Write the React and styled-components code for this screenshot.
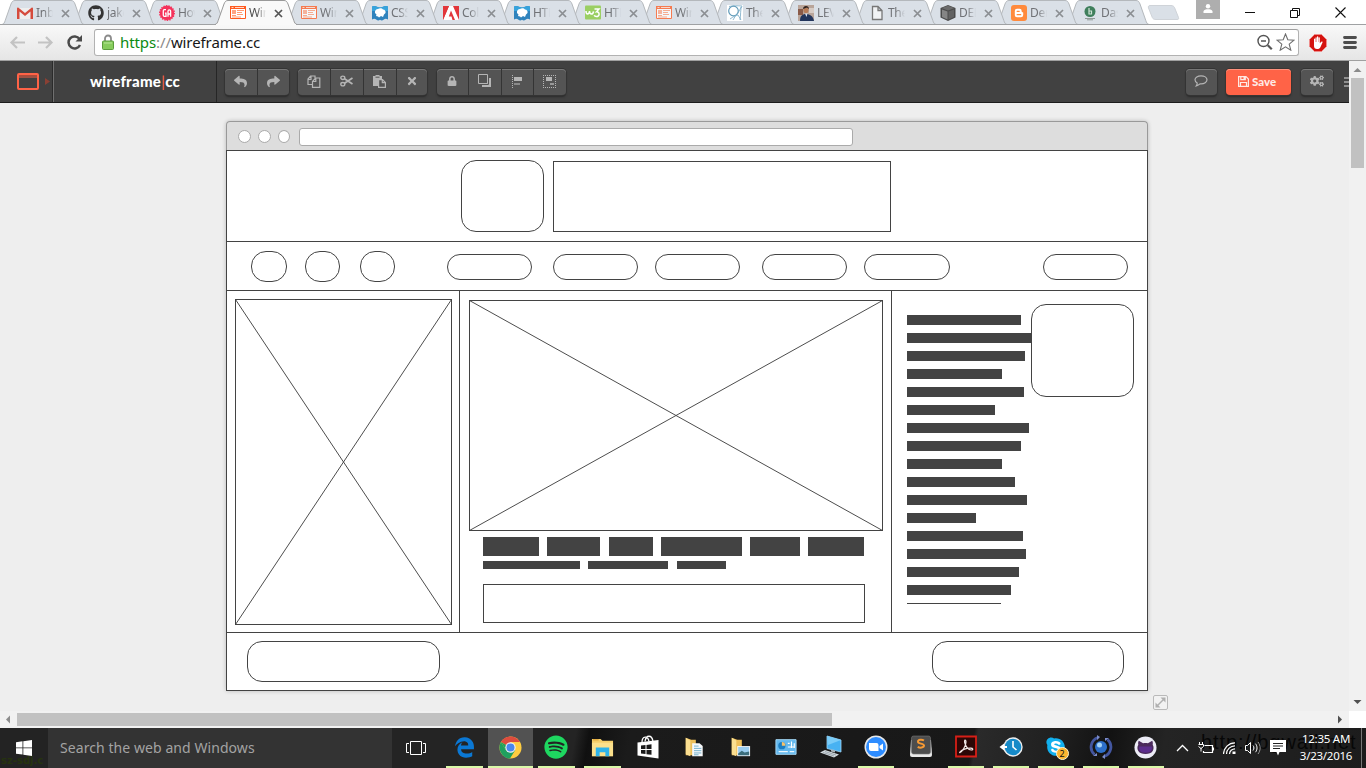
import React from "react";
import styled, { createGlobalStyle, css } from "styled-components";
import {
  FaReply, FaShare, FaTimes, FaLock, FaGithub, FaSpotify, FaSkype, FaCogs,
} from "react-icons/fa";
import { FaEdgeLegacy } from "react-icons/fa6";

const INK = "#434343";
const UI = `"Noto Sans", "Open Sans", sans-serif`;

const Global = createGlobalStyle`
  *, *::before, *::after { box-sizing: border-box; }
  body { margin: 0; overflow: hidden; font-family: ${UI}; }
  svg { display: block; flex: none; }
`;

const Screen = styled.div`
  width: 1366px;
  height: 768px;
  display: flex;
  flex-direction: column;
  overflow: hidden;
  background: #fff;
`;

/* ---------- browser tabs ---------- */

const TabStrip = styled.div`
  height: 25px;
  display: flex;
  align-items: flex-start;
  padding-left: 2px;
  background: #fff;
  box-shadow: inset 0 -1px #9fa1a3;
`;

const Tab = styled.div`
  position: relative;
  z-index: ${(p) => p.$z};
  width: 82px;
  height: 25px;
  margin-right: -11px;
  padding: 1px 0 0 15px;
  display: flex;
  align-items: center;
  flex: none;
`;

const TabShape = styled.svg`
  position: absolute;
  left: 0;
  top: 0;
  z-index: -1;
`;

const TabTitle = styled.span`
  width: 17px;
  margin: 0 8px 0 3px;
  overflow: hidden;
  white-space: nowrap;
  font-size: 12px;
  line-height: 20px;
  letter-spacing: -0.3px;
  color: ${(p) => (p.$active ? "#4c4c4c" : "#707276")};
  mask-image: linear-gradient(90deg, #000 45%, transparent 100%);
`;

const NewTab = styled.svg`
  margin: 4px 0 0 9px;
`;

const UserBadge = styled.div`
  width: 24px;
  height: 19px;
  margin-left: 15px;
  display: flex;
  justify-content: center;
  padding-top: 4px;
  background: #aeaeae;
`;

const WindowButtons = styled.div`
  display: flex;
  align-items: center;
  height: 24px;
  margin-left: 25px;
  gap: 35px;
`;

/* ---------- address row ---------- */

const AddressRow = styled.div`
  height: 36px;
  display: flex;
  align-items: center;
  padding: 0 9px;
  background: linear-gradient(#f8f8f8, #e6e6e6);
  border-bottom: 1px solid #a0a0a0;
`;

const NavIcons = styled.div`
  display: flex;
  gap: 13px;
  width: 85px;
  padding-bottom: 1px;
`;

const Omnibox = styled.div`
  width: 1205px;
  height: 27px;
  display: flex;
  align-items: center;
  padding: 0 3px 1px 7px;
  background: #fff;
  border: 1px solid #b2b2b2;
  border-top-color: #9f9f9f;
  border-radius: 3px;
`;

const Url = styled.span`
  flex: 1;
  margin-left: 6px;
  font-size: 15px;
  line-height: 20px;
  letter-spacing: -0.1px;
  color: #161616;
  i { font-style: normal; color: #0b8a12; }
  b { font-weight: 400; color: #8a8a8a; }
`;

const StarSlot = styled.div`
  margin-left: 3px;
`;

const ExtensionSlot = styled.div`
  margin: 0 16px 0 10px;
`;

/* ---------- editor ---------- */

const Viewport = styled.div`
  flex: 1;
  display: flex;
  min-height: 0;
`;

const Page = styled.div`
  width: 1349px;
  height: 650px;
  background: #eee;
  overflow: hidden;
`;

const Toolbar = styled.div`
  height: 42px;
  display: flex;
  align-items: center;
  background: #414141;
  border-bottom: 1px solid #1c1c1c;
`;

const LogoCell = styled.div`
  width: 54px;
  height: 41px;
  display: flex;
  align-items: center;
  padding-left: 17px;
  gap: 6px;
  border-right: 1px solid #707070;
  box-shadow: inset -1px 0 #2b2b2b;
`;

const BrandCell = styled.div`
  width: 163px;
  height: 41px;
  display: flex;
  align-items: center;
  justify-content: center;
  border-right: 1px solid #262626;
  font: 900 15px/20px Lato, sans-serif;
  letter-spacing: 0.27px;
  color: #fff;
  i { font-style: normal; font-weight: 400; color: #ff6347; }
`;

const Wordmark = styled.span`
  padding-bottom: 2px;
`;

const buttonFace = css`
  height: 26px;
  background: #545454;
  border-radius: 4px;
  box-shadow: 0 0 0 1px #343434, inset 0 1px #777, 0 2px 2px #2a2a2a;
`;

const ButtonGroup = styled.div`
  ${buttonFace}
  display: flex;
  margin-left: ${(p) => p.$gap}px;
  overflow: visible;
`;

const ToolButton = styled.div`
  width: ${(p) => p.$w || 32}px;
  height: 26px;
  display: flex;
  align-items: center;
  justify-content: center;
  padding: 0 1px 1px 0;
  color: #b5b5b5;
  & + & { border-left: 1px solid #343434; }
`;

const Spacer = styled.div`
  flex: 1;
`;

const SaveButton = styled.div`
  ${buttonFace}
  width: 65px;
  margin: 0 10px 0 9px;
  display: flex;
  align-items: center;
  justify-content: center;
  gap: 3px;
  padding-right: 3px;
  background: #ff6347;
  box-shadow: 0 0 0 1px #3a3533, inset 0 1px #ff917d, 0 2px 2px #2a2a2a;
  font: 900 11.5px/16px Lato, sans-serif;
  color: #ffe9e4;
`;

const MoreSlot = styled.div`
  width: 5px;
  margin-left: 11px;
  overflow: hidden;
`;

/* ---------- wireframe document ---------- */

const Doc = styled.div`
  width: 922px;
  margin: 18px 0 0 226px;
  box-shadow: 0 0 4px rgba(0, 0, 0, 0.22);
  border-radius: 4px 4px 0 0;
`;

const DocChrome = styled.div`
  height: 29px;
  display: flex;
  align-items: center;
  gap: 7px;
  padding: 1px 0 0 11px;
  background: #ddd;
  border: 1px solid #999;
  border-bottom: 0;
  border-radius: 4px 4px 0 0;
`;

const Dot = styled.div`
  width: ${(p) => p.$w || 13}px;
  height: 13px;
  border: 1px solid #aaa;
  border-radius: 50%;
  background: #fff;
`;

const DocUrl = styled.div`
  width: 554px;
  height: 18px;
  margin-left: 2px;
  border: 1px solid #aaa;
  border-radius: 3px;
  background: #fff;
`;

const DocBody = styled.div`
  border: 1px solid ${INK};
  background: #fff;
`;

const Band = styled.div`
  display: flex;
  align-items: flex-start;
  height: ${(p) => p.$h}px;
  padding: ${(p) => p.$pad || "0"};
  border-bottom: ${(p) => (p.$last ? "0" : `1px solid ${INK}`)};
`;

const Column = styled.div`
  width: ${(p) => p.$w}px;
  height: 341px;
  padding: ${(p) => p.$pad};
  border-right: ${(p) => (p.$last ? "0" : `1px solid ${INK}`)};
`;

const Box = styled.div`
  width: ${(p) => p.$w}px;
  height: ${(p) => p.$h}px;
  margin: ${(p) => p.$m || "0"};
  border: 1px solid ${INK};
  border-radius: ${(p) => p.$r || 0}px;
  background: #fff;
  flex: none;
`;

const Words = styled.div`
  display: flex;
  height: ${(p) => p.$h}px;
  margin: ${(p) => p.$m};
`;

const Word = styled.div`
  width: ${(p) => p.$w}px;
  height: ${(p) => p.$h}px;
  margin-right: ${(p) => p.$gap || 0}px;
  background: ${INK};
`;

const TextLines = styled.div`
  width: 124px;
  height: 289px;
  margin-top: 11px;
  overflow: hidden;
  display: flex;
  flex-direction: column;
  gap: 8px;
  > * { flex: none; }
`;

const Aside = styled.div`
  display: flex;
  align-items: flex-start;
`;

const ResizeHandle = styled.div`
  margin: 4px 0 0 1153px;
`;

/* ---------- scrollbars ---------- */

const VScroll = styled.div`
  width: 17px;
  height: 650px;
  display: flex;
  flex-direction: column;
  align-items: center;
  background: #f1f1f1;
`;

const VThumb = styled.div`
  width: 13px;
  height: 90px;
  margin-bottom: auto;
  background: #c1c1c1;
`;

const HScroll = styled.div`
  width: 1349px;
  height: 17px;
  display: flex;
  align-items: center;
  background: #f1f1f1;
`;

const HThumb = styled.div`
  width: 815px;
  height: 13px;
  margin-right: auto;
  background: #c1c1c1;
`;

const ArrowSlot = styled.div`
  width: 17px;
  height: 17px;
  display: flex;
  align-items: center;
  justify-content: center;
`;

/* ---------- taskbar ---------- */

const Taskbar = styled.div`
  height: 40px;
  display: flex;
  background: linear-gradient(100deg, #242424 0 42%, #101010 43%, #1b1b1b 46%, #181818 71%, #2a2a2a 71.3%, #202020 77%, #121212 81%, #242424 85%, #1c1c1c 100%);
`;

const Start = styled.div`
  position: relative;
  width: 48px;
  display: flex;
  align-items: center;
  justify-content: center;
  background: #232323;
  overflow: hidden;
`;

const StartMark = styled.span`
  position: absolute;
  left: 1px;
  top: 27px;
  font: 700 10px/12px "DejaVu Sans", sans-serif;
  color: #26330f;
`;

const Search = styled.div`
  width: 344px;
  padding: 0 0 1px 12px;
  display: flex;
  align-items: center;
  background: #333;
  font-size: 14px;
  letter-spacing: 0.07px;
  color: #a3a3a3;
`;

const TaskView = styled.div`
  width: 49px;
  display: flex;
  align-items: center;
  padding-left: 14px;
`;

const AppCell = styled.div`
  width: ${(p) => p.$w}px;
  height: 40px;
  padding: 0 0 0 5px;
  flex: none;
`;

const AppFace = styled.div`
  width: ${(p) => (p.$active ? 45 : p.$w - 9)}px;
  height: 40px;
  margin-left: ${(p) => (p.$active ? -4 : 0)}px;
  display: flex;
  align-items: center;
  justify-content: center;
  padding-right: 1px;
  background: ${(p) => (p.$active ? "#525252" : "transparent")};
  border-bottom: ${(p) => (p.$running ? "2px solid #d9f8a8" : "2px solid transparent")};
  background-clip: padding-box;
`;

const Tray = styled.div`
  position: relative;
  flex: 1;
  display: flex;
  align-items: center;
  padding-left: 8px;
`;

const TrayMark = styled.span`
  position: absolute;
  left: 33px;
  top: 1px;
  font: 20px/26px "Liberation Sans", sans-serif;
  letter-spacing: 0.9px;
  color: #070707;
`;

const TrayIcons = styled.div`
  position: relative;
  display: flex;
  align-items: center;
  gap: 9px;
`;

const Clock = styled.div`
  position: relative;
  width: 62px;
  margin-left: 9px;
  padding-bottom: 2px;
  display: flex;
  flex-direction: column;
  align-items: center;
  gap: 1px;
  font-size: 11.5px;
  line-height: 16px;
  letter-spacing: -0.25px;
  color: #fff;
`;

const DesktopEdge = styled.div`
  width: 5px;
  height: 40px;
  margin-left: auto;
  border-left: 1px solid #777;
`;

/* ---------- favicons ---------- */

const I16 = (p) => <svg width="16" height="16" viewBox="0 0 16 16" {...p} />;

const Gmail = () => (
  <I16>
    <path d="M1 3h14v11H1z" fill="#eee" />
    <path d="M0 3.400C0 2.600.8 2.300 1.500 2.800L8 8l6.500-5.200c.7-.5 1.500-.2 1.500.6V14h-2.500V6.500L8 11 2.500 6.500V14H0z" fill="#d54b3d" />
  </I16>
);
const Assembly = () => (
  <I16>
    <circle cx="8" cy="8" r="7.200" fill="#f5325b" stroke="#f5325b" strokeWidth="1.500" strokeDasharray="1.500 1" />
    <path d="M7 4.700H5.300a1 1 0 0 0-1 1v4.600a1 1 0 0 0 1 1H7V8.200H6M9 11.700V6.200a1.300 1.300 0 0 1 2.600 0v5.500M9 9h2.600" fill="none" stroke="#fff" strokeWidth="1.300" />
  </I16>
);
const Wire = ({ dim }) => (
  <I16 opacity={dim ? 0.75 : 1}>
    <path d="M0 1h16v13H0z" fill="#fff" />
    <path d="M0 1h16v3H0z" fill="#ff5a1f" />
    <path d="M.5 1.500h15v12H.5z" fill="none" stroke="#ff5a1f" />
    <path d="M1.500 2.500h2M5 2.500h9" stroke="#ffd8c8" />
    <path d="M2 5h4v4H2z" fill="#ffa483" />
    <path d="M7 5.500h7M7 7.500h5M7 9.500h6M2 10.500h4M2 12h9" stroke="#ff9b75" />
  </I16>
);
const Mdn = () => (
  <I16>
    <path d="M0 1.500c2-1 3.500-.6 5 .3 1.500 1 4.500 1 6 0 1.500-.9 3-1.300 5-.3v13c-2-1-3-.8-4.500.3-1 .8-2.500.8-3.500 0-1 .8-2.500.8-3.500 0C3 13.700 2 13.500 0 14.500z" fill="#2f83bd" />
    <path d="M0 1.500c2-1 3.500-.6 5 .3 1.500 1 4.500 1 6 0 1.500-.9 3-1.300 5-.3V6H0z" fill="#36a3dc" />
    <path d="M3 8c-.5-2 1-4 3-4 1.500-1 4-1 5 .5 2 0 3 2 2.500 3.500L12 9.500 11 12l-2-1-2 1.500-1-1-2-.5.500-1.500z" fill="#fff" />
  </I16>
);
const Adobe = () => (
  <I16>
    <path d="M0 1h16v14H0z" fill="#e2363b" />
    <path d="M6 1h4l6 14h-4L8 5.500 5.800 11.500h2.700L9.500 15H0z" fill="#fff" />
    <path d="M0 1h6L0 15z" fill="#e2363b" />
  </I16>
);
const W3 = () => (
  <I16>
    <rect width="16" height="14" y="0.500" rx="1" fill="#9bcf63" />
    <path d="M1 6c0 4 3 4 3.500 0 .3 4 3.500 4 4 .3M9.500 4H14l-2.500 2.800c3.500-.3 3.500 5-.3 4.800-1 0-1.700-.5-2-1.300" fill="none" stroke="#fff" strokeWidth="1.500" />
  </I16>
);
const Sketch = () => (
  <I16>
    <path d="M0 0h16v16H0z" fill="#fff" />
    <circle cx="6.500" cy="6" r="4.800" fill="none" stroke="#5f9ab9" strokeWidth="1.200" />
    <path d="M2 1.500c4-1 9-.8 13-.5-2 3-1 9-2 14M9 10c2-2 4-5 5-8M3 14c3-2 6-4 8-4l3 5M6 15l3-5" fill="none" stroke="#76aac5" strokeWidth=".8" />
  </I16>
);
const Photo = () => (
  <I16>
    <path d="M0 0h16v16H0z" fill="#b9a59a" />
    <path d="M0 4h5v6H0z" fill="#8a5b49" />
    <path d="M11 3h5v5h-5z" fill="#d7cbc4" />
    <path d="M2 16c0-5 2-7 6-7s7 2 8 7z" fill="#22355c" />
    <ellipse cx="8" cy="4.800" rx="2.600" ry="3.400" fill="#b77c58" />
    <path d="M5 4c0-4 6-4 6 0L9 2.500z" fill="#2b211f" />
    <path d="M7 8.500h2.500L8.500 12z" fill="#d9e2f2" />
  </I16>
);
const FileIcon = () => (
  <I16>
    <path d="M3.500 1.500H9l4 4v9H3.500zM9 1.500v4h4" fill="#f0f2f4" stroke="#777" strokeWidth="1.300" />
  </I16>
);
const Cube = () => (
  <I16>
    <path d="M8 0l7.500 3v9.500L8 16 .5 12.500V3z" fill="#4b4b4b" />
    <path d="M8 .7L14.500 3 8 5.500 1.500 3z" fill="#6b6b6b" />
    <path d="M2 4.500l5.500 2v8L2 12z" fill="#858585" />
    <path d="M14 4.500l-5.500 2v8L14 12z" fill="#626262" />
  </I16>
);
const Blogger = () => (
  <I16>
    <rect width="16" height="16" rx="3" fill="#ff8a3c" />
    <path d="M6 3.800h2.500a2.200 2.200 0 0 1 2.200 2.200v.7c0 .6 1.500.2 1.500 1V10a2.300 2.300 0 0 1-2.300 2.300H6A2.200 2.200 0 0 1 3.800 10V6A2.200 2.200 0 0 1 6 3.800z" fill="#fff" />
    <path d="M6.200 6.300h2M6.200 9.700h3.500" stroke="#ff8a3c" strokeWidth="1.300" strokeLinecap="round" />
  </I16>
);
const Dash = () => (
  <I16>
    <circle cx="8" cy="6.500" r="5.500" fill="#3f7f5c" />
    <path d="M7 3v6h2.500V6H7" fill="none" stroke="#cfe3d6" strokeWidth="1.200" />
    <path d="M3 13.500h10M5 14.800h6" stroke="#8f9a96" />
  </I16>
);

const TABS = [
  ["Inbox", <Gmail />],
  ["jake", <FaGithub size={16} color="#333" />],
  ["How", <Assembly />],
  ["Wire", <Wire />],
  ["Wire", <Wire dim />],
  ["CSS", <Mdn />],
  ["Color", <Adobe />],
  ["HTML", <Mdn />],
  ["HTML", <W3 />],
  ["Wire", <Wire dim />],
  ["The", <Sketch />],
  ["LEVI", <Photo />],
  ["The", <FileIcon />],
  ["DEN", <Cube />],
  ["Dem", <Blogger />],
  ["Dash", <Dash />],
];
const ACTIVE_TAB = 3;

/* ---------- toolbar glyphs ---------- */

const CopyIcon = () => (
  <svg width="14" height="13" viewBox="0 0 14 13" fill="none" stroke="currentColor" strokeWidth="1.200">
    <path d="M5 9.500H1V4l2.500-3H8v2M4 1v3.500H1" />
    <path d="M5.500 12.300V6.500L8.500 3h4.300v9.300zM8.800 3v3.500H5.500" />
  </svg>
);
const CutIcon = () => (
  <svg width="13" height="12" viewBox="0 0 13 12" fill="none" stroke="currentColor" strokeWidth="1.400">
    <ellipse cx="2.800" cy="2.800" rx="2" ry="1.700" />
    <ellipse cx="2.800" cy="9.200" rx="2" ry="1.700" />
    <path d="M4.500 3.800L12.500 9M4.500 8.200L12.500 3" strokeWidth="1.700" />
  </svg>
);
const PasteIcon = () => (
  <svg width="13" height="13" viewBox="0 0 13 13">
    <path d="M0 1h2.500V0h4v1H9v3H5v7H0z" fill="currentColor" />
    <path d="M2.500 2.200h4" stroke="#545454" />
    <path d="M5.600 4.600h3.900l2.900 2.900v4.900H5.600zM9.300 4.600v3h3" fill="#545454" stroke="currentColor" strokeWidth="1.200" />
  </svg>
);
const CommentIcon = () => (
  <svg width="14" height="12" viewBox="0 0 14 12" fill="none" stroke="currentColor" strokeWidth="1.200">
    <path d="M7 .8c3.300 0 6 1.700 6 4s-2.700 4-6 4H6C5 9.800 3.500 10.500 2.300 10.800 2.900 10 3.200 9 3.200 8 1.800 7.200 1 6.100 1 4.800c0-2.300 2.700-4 6-4z" />
  </svg>
);
const FloppyIcon = () => (
  <svg width="11" height="11" viewBox="0 0 11 11" fill="none" stroke="currentColor" strokeWidth="1.200">
    <path d="M.6.6H8l2.400 2.400v7.400H.6zM2.800.6v3h4.500v-3M2.500 10.400V6.500h6v3.900" />
    <path d="M5.500 1h1.500v2H5.500z" fill="currentColor" stroke="none" />
  </svg>
);
const LayerIcon = () => (
  <svg width="14" height="14" viewBox="0 0 14 14">
    <path d="M4 4h9v9H4z" fill="#b5b5b5" />
    <path d="M10.500 2v8.500H2" fill="none" stroke="#545454" />
    <path d="M.5.5h9v9h-9z" fill="#545454" stroke="#b5b5b5" />
  </svg>
);
const AlignIcon = () => (
  <svg width="11" height="13" viewBox="0 0 11 13">
    <path d="M.5 0v13" stroke="#b5b5b5" strokeDasharray="1 1" />
    <path d="M2 2h8v4H2z" fill="#b5b5b5" />
    <path d="M2 8h6v2H2z" fill="#8a8a8a" />
  </svg>
);
const GroupIcon = () => (
  <svg width="13" height="13" viewBox="0 0 13 13">
    <path d="M0 .5h13M0 12.500h13M.5 0v13M12.500 0v13" stroke="#b5b5b5" strokeDasharray="1 1" />
    <path d="M3 2h6v4H3z" fill="#b5b5b5" />
    <path d="M7 8h4v2H7z" fill="#999" />
  </svg>
);

/* ---------- taskbar icons ---------- */

const T = ({ s = 24, children }) => <svg width={s} height={s} viewBox="0 0 24 24">{children}</svg>;

const ChromeIcon = () => (
  <T s={23}>
    <circle cx="12" cy="12" r="11.500" fill="#ffcd41" />
    <path d="M12 12L2 6.300A11.500 11.500 0 0 1 22 6.300H12z" fill="#dd4c3e" />
    <path d="M2 6.300A11.500 11.500 0 0 0 11.500 23.500L17 14.500 12 12 7.500 15z" fill="#1fa05f" />
    <path d="M12 12L2 6.300 7.500 15z" fill="#1fa05f" />
    <circle cx="12" cy="12" r="5.400" fill="#f4f4f4" />
    <circle cx="12" cy="12" r="4.200" fill="#4a87ee" />
  </T>
);
const Explorer = () => (
  <T s={23}>
    <path d="M1 3h9l2 2h11v16H1z" fill="#f5cf6b" />
    <path d="M1 7h22v14H1z" fill="#fbe08c" />
    <path d="M2 4h6" stroke="#d89a2c" />
    <path d="M5 21v-9h14v9h-4v-4H9v4z" fill="#2eb3ea" />
  </T>
);
const Store = () => (
  <T>
    <path d="M6 7.500c0-7 6-7 7-1M9 6.500c1-7 7-7 8 0" fill="none" stroke="#fff" strokeWidth="1.300" />
    <path d="M1.500 7.500L22.500 5v18.500l-21-3z" fill="#fff" />
    <path d="M5 10.500l4.500-.5v4H5zM10.500 9.900l5-.6V14h-5zM5 15h4.500v4L5 18.400zM10.500 15h5v4.800l-5-.6z" fill="#1b1b1b" />
  </T>
);
const FolderDoc = () => (
  <T s={22}>
    <path d="M3 2l6 2h5v17H3z" fill="#eebf59" />
    <path d="M3 2l5 3v17l-5-2z" fill="#fbdf91" />
    <path d="M10 8h8l3.500 3v11H10z" fill="#f6f8fa" />
    <path d="M12 11h5M12 13.500h8M12 16h8M12 18.500h8M12 20.500h5" stroke="#6aaccb" />
  </T>
);
const FolderPic = () => (
  <T s={22}>
    <path d="M3 2l6 2h5v17H3z" fill="#eebf59" />
    <path d="M3 2l5 3v17l-5-2z" fill="#fbdf91" />
    <path d="M9 11h14v11H9z" fill="#f6f8fa" />
    <path d="M10 12h12v9H10z" fill="#9acdf0" />
    <path d="M10 19l4-3 3 2 5-1v4H10z" fill="#3b6d7c" />
  </T>
);
const Control = () => (
  <T s={22}>
    <path d="M1 4h22v16H1z" fill="#63b8ee" stroke="#a9dcfa" />
    <circle cx="7.500" cy="10.500" r="4" fill="#1c7fc4" />
    <path d="M7.500 10.500v-4a4 4 0 0 1 3.800 4z" fill="#f6c26b" />
    <path d="M14 8h2M18 6v7M21 8v5M14 12h7" stroke="#fff" strokeWidth="1.300" />
    <path d="M4 17h10M16 17h5" stroke="#ecf8ff" strokeWidth="1.400" />
  </T>
);
const Pc = () => (
  <T>
    <path d="M8 1l14 4v12L8 13.500z" fill="#48b2f2" stroke="#9ed6f7" strokeWidth=".8" />
    <path d="M8 1l14 4L9 10z" fill="#7accf8" />
    <path d="M12 14.500l4 1v2l-4-1z" fill="#aab3b9" />
    <path d="M1 17.500l5-2.500 14 4.500-5 3z" fill="#d5dce1" />
    <path d="M4 17.500l11 3.500M6 16.500l11 3.500" stroke="#8f9aa2" strokeWidth=".8" />
  </T>
);
const ZoomIcon = () => (
  <T>
    <circle cx="12" cy="12" r="11.500" fill="#e8e8e8" />
    <circle cx="12" cy="12" r="10" fill="#2d8cff" />
    <path d="M5 8h7.500a2 2 0 0 1 2 2v6H7a2 2 0 0 1-2-2zM15.500 11l3.500-2.500v7L15.500 13z" fill="#fff" />
  </T>
);
const Sublime = () => (
  <T>
    <path d="M2 5h20l1 15q0 2-2 2H3q-2 0-2-2z" fill="#e9e9e9" />
    <rect x="2.500" y="1" width="19" height="18" rx="2" fill="#4d4d4d" stroke="#777" strokeWidth=".6" />
    <path d="M15 5.500c-2-1.200-6-1-6 1.200 0 2.400 6 1.400 6 3.900 0 2.300-4.200 2.500-6.300 1.300" fill="none" stroke="#f79a33" strokeWidth="2" />
  </T>
);
const Acrobat = () => (
  <T>
    <path d="M2 1.500h20v20H2z" fill="#2b0706" stroke="#d61f17" strokeWidth="1.800" />
    <path d="M6 17.500c2-.7 6-6.500 6-10.500 0-2.500-2-2.500-1.300.5.800 3.500 3.500 7.500 6.500 7.500 2.500 0 2-2-1-1.800-3.500.2-8 1.800-9.700 3.300-1 1-1 1.500-.5 1z" fill="none" stroke="#f3e9e8" strokeWidth="1.200" />
  </T>
);
const BackupClock = () => (
  <T>
    <circle cx="14" cy="12" r="9.700" fill="#eee" />
    <circle cx="14" cy="12" r="8.300" fill="#168ac8" />
    <path d="M14 6v6l3.500 3" stroke="#fff" strokeWidth="1.600" fill="none" />
    <path d="M5 8.500L.5 12 5 15.500V13h3v-2H5z" fill="#fff" />
  </T>
);
const SkypeSlot = styled.div`
  position: relative;
  display: flex;
  > svg { background: radial-gradient(#fff 45%, transparent 46%); }
`;
const Count = styled.span`
  position: absolute;
  left: 11px;
  top: 11px;
  width: 13px;
  height: 13px;
  border-radius: 50%;
  border: 1px solid #fff5d0;
  background: #fdb62f;
  font: 9px/11px ${UI};
  text-align: center;
  color: #111;
`;
const Globe = () => (
  <T>
    <circle cx="12" cy="12" r="6" fill="#2d6fc9" />
    <circle cx="10.500" cy="10" r="2.500" fill="#a5d3f7" />
    <path d="M9 2.500A10 10 0 0 0 5.500 19.500M15 21.500A10 10 0 0 0 18.500 4.500" fill="none" stroke="#4356a0" strokeWidth="2.800" />
    <path d="M8 0l3 2-3 3zM16 24l-3-2 3-3zM4 21h4v-3zM20 3h-4v3z" fill="#7a8bca" />
  </T>
);
const GitCat = () => (
  <T s={23}>
    <circle cx="12" cy="12" r="11.500" fill="#ececf6" />
    <path d="M5 5l4.500 2.500c1.500-.4 3.500-.4 5 0L19 5c.8 1.500.8 3 .5 4.200 1.300 2 1.200 4.600 0 6.500C18 18 15.500 18.800 12 18.800S6 18 4.500 15.700c-1.200-1.900-1.300-4.500 0-6.500C4.200 8 4.200 6.500 5 5z" fill="#4a2a5c" />
    <path d="M5.500 11h13c1 3.500-1 6.500-6.500 6.500S4.500 14.500 5.500 11z" fill="#5b2d8d" />
  </T>
);

const APPS = [
  { icon: <FaEdgeLegacy size={21} color="#0b78d4" />, running: true },
  { icon: <ChromeIcon />, running: true, active: true },
  { icon: <FaSpotify size={24} color="#1ed760" />, running: true },
  { icon: <Explorer />, running: true },
  { icon: <Store /> },
  { icon: <FolderDoc /> },
  { icon: <FolderPic /> },
  { icon: <Control /> },
  { icon: <Pc /> },
  { icon: <ZoomIcon />, running: true },
  { icon: <Sublime /> },
  { icon: <Acrobat />, running: true },
  { icon: <BackupClock />, running: true },
  { icon: <SkypeSlot><FaSkype size={22} color="#12b0ee" /><Count>2</Count></SkypeSlot>, running: true },
  { icon: <Globe />, running: true },
  { icon: <GitCat />, running: true },
];

/* ---------- wireframe data ---------- */

const WORDS_BIG = [[56, 8], [53, 9], [44, 8], [81, 8], [50, 8], [56, 0]];
const WORDS_SMALL = [[97, 8], [80, 9], [49, 0]];
const LINES = [114, 124, 118, 95, 117, 88, 122, 114, 95, 108, 120, 69, 116, 119, 112, 104, 94];

const Crossed = ({ w, h }) => (
  <svg width={w} height={h} viewBox={`0 0 ${w} ${h}`} fill="none" stroke={INK}>
    <rect x=".5" y=".5" width={w - 1} height={h - 1} />
    <path d={`M.5 .5L${w - 0.5} ${h - 0.5}M${w - 0.5} .5L.5 ${h - 0.5}`} strokeWidth=".95" />
  </svg>
);

const Arrow = ({ d, fill = "#505050" }) => (
  <ArrowSlot>
    <svg width="9" height="9" viewBox="0 0 9 9"><path d={d} fill={fill} /></svg>
  </ArrowSlot>
);

function BrowserTab({ title, icon, active, z }) {
  return (
    <Tab $z={z}>
      <TabShape width="82" height="25">
        <path
          d="M0 24.500C2 24 2.500 22.500 3.200 20.500L9 4C10 1.500 11 .5 13 .5H69C71 .5 72 1.500 73 4L78.800 20.500C79.500 22.500 80 24 82 24.500"
          fill={active ? "#f9f9f9" : "#dae0e7"}
          stroke={active ? "#999" : "#b4b8bc"}
        />
        {active ? <path d="M1 24.500h80" stroke="#f9f9f9" /> : <path d="M0 24.500h82" stroke="#9fa1a3" />}
      </TabShape>
      {icon}
      <TabTitle $active={active}>{title}</TabTitle>
      <svg width="9" height="9" viewBox="0 0 9 9">
        <path d="M1 1l7 7M8 1L1 8" stroke={active ? "#555" : "#8b8e92"} strokeWidth="1.700" />
      </svg>
    </Tab>
  );
}

export default function App() {
  return (
    <Screen>
      <Global />
      <TabStrip>
        {TABS.map(([title, icon], i) => (
          <BrowserTab key={i} title={title} icon={icon} active={i === ACTIVE_TAB} z={i === ACTIVE_TAB ? 40 : 20 - i} />
        ))}
        <NewTab width="34" height="17">
          <path d="M3 1.500h21c2 0 3 1 3.500 2l4 10c.4 1.500 0 2-1.500 2H9c-2 0-3-.5-3.700-2L1.500 4C1 2.500 1.500 1.500 3 1.500z" fill="#dae0e7" stroke="#cfd3d8" />
        </NewTab>
        <UserBadge>
          <svg width="10" height="9" viewBox="0 0 10 9" fill="#fff"><circle cx="5" cy="2.200" r="2.200" /><path d="M.5 9V7.500C.5 5.800 3 5.300 5 5.300s4.500.5 4.500 2.200V9z" /></svg>
        </UserBadge>
        <WindowButtons>
          <svg width="10" height="11"><path d="M0 5.500h10" stroke="#111" /></svg>
          <svg width="10" height="11" fill="none" stroke="#111"><path d="M.5 3.500h7v7h-7zM2.500 3V1.500h7v7H8" /></svg>
          <svg width="11" height="11" stroke="#111" strokeWidth="1.100"><path d="M.5.5l10 10M10.500.5l-10 10" /></svg>
        </WindowButtons>
      </TabStrip>

      <AddressRow>
        <NavIcons>
          <svg width="16" height="15" fill="none" stroke="#c3c3c3" strokeWidth="2.200"><path d="M8 2L2.500 7.500 8 13M2.500 7.500H16" /></svg>
          <svg width="16" height="15" fill="none" stroke="#c3c3c3" strokeWidth="2.200"><path d="M8 2l5.500 5.500L8 13M13.500 7.500H0" /></svg>
          <svg width="16" height="15" fill="none" stroke="#4a4a4a" strokeWidth="2.500"><path d="M12.500 4A6 6 0 1 0 13 10" /><path d="M15 0v6.500H8.500z" fill="#4a4a4a" stroke="none" /></svg>
        </NavIcons>
        <Omnibox>
          <svg width="12" height="16" viewBox="0 0 12 16">
            <path d="M3 8V4.500a3 3 0 0 1 6 0V8" fill="none" stroke="#8b8b8b" strokeWidth="1.800" />
            <rect x=".5" y="7" width="11" height="8.500" rx="1" fill="#86cc5c" stroke="#5b9c3c" />
            <path d="M2 9h8" stroke="#b9e79a" />
          </svg>
          <Url><i>https</i><b>://</b>wireframe.cc</Url>
          <svg width="17" height="17" fill="none" stroke="#555"><circle cx="7.500" cy="7" r="5.500" strokeWidth="1.400" /><path d="M5 7h5" strokeWidth="1.500" /><path d="M11.800 11.300l4 4" strokeWidth="2.200" /></svg>
          <StarSlot>
            <svg width="19" height="18" viewBox="0 0 19 18"><path d="M9.500 1l2.300 5.800 6.200.4-4.800 4 1.600 6-5.300-3.400-5.300 3.400 1.600-6L1 7.200l6.200-.4z" fill="#fff" stroke="#6e6e6e" strokeWidth="1.100" /></svg>
          </StarSlot>
        </Omnibox>
        <ExtensionSlot>
          <svg width="18" height="18" viewBox="0 0 18 18">
            <path d="M5.500.5h7l5 5v7l-5 5h-7l-5-5v-7z" fill="#d5130f" stroke="#ee8d8b" />
            <path d="M5 9.500V5.200c0-.8 1.200-.8 1.200 0V8h.3V3.800c0-.9 1.200-.9 1.200 0V8h.3V3c0-.9 1.300-.9 1.300 0v5h.3V3.800c0-.9 1.200-.9 1.200 0v5.400l1.500-1.500c.8-.6 1.600 0 1.200.8L11.500 13c-.7 1.600-1.500 2-3.500 2-2 0-3-1-3-3z" fill="#fff" />
          </svg>
        </ExtensionSlot>
        <svg width="14" height="13" stroke="#4d4d4d" strokeWidth="2.800" strokeLinecap="round"><path d="M1.500 1.500h11M1.500 6.500h11M1.500 11.500h11" /></svg>
      </AddressRow>

      <Viewport>
        <Page>
          <Toolbar>
            <LogoCell>
              <svg width="22" height="17" viewBox="0 0 22 17" fill="none" stroke="#ff6347" strokeWidth="2"><rect x="1" y="1" width="20" height="15" rx="1" /><path d="M2 4h18" strokeWidth="1" /><path d="M2 2.500h18" stroke="#b04a38" strokeWidth="1" /></svg>
              <svg width="5" height="7"><path d="M0 0l5 3.500L0 7z" fill="#8a4034" /></svg>
            </LogoCell>
            <BrandCell><Wordmark>wireframe<i>|</i>cc</Wordmark></BrandCell>
            <ButtonGroup $gap={8}>
              <ToolButton><FaReply size={13} /></ToolButton>
              <ToolButton><FaShare size={13} /></ToolButton>
            </ButtonGroup>
            <ButtonGroup $gap={9}>
              <ToolButton><CopyIcon /></ToolButton>
              <ToolButton $w={33}><CutIcon /></ToolButton>
              <ToolButton $w={33}><PasteIcon /></ToolButton>
              <ToolButton $w={31}><FaTimes size={12} /></ToolButton>
            </ButtonGroup>
            <ButtonGroup $gap={10}>
              <ToolButton $w={31}><FaLock size={10} /></ToolButton>
              <ToolButton $w={33}><LayerIcon /></ToolButton>
              <ToolButton><AlignIcon /></ToolButton>
              <ToolButton $w={33}><GroupIcon /></ToolButton>
            </ButtonGroup>
            <Spacer />
            <ButtonGroup $gap={0}><ToolButton $w={31}><CommentIcon /></ToolButton></ButtonGroup>
            <SaveButton><FloppyIcon />Save</SaveButton>
            <ButtonGroup $gap={0}><ToolButton><FaCogs size={14} /></ToolButton></ButtonGroup>
            <MoreSlot><svg width="12" height="10" stroke="#aaa" strokeWidth="1.500"><path d="M0 1h12M0 5h12M0 9h12" /></svg></MoreSlot>
          </Toolbar>

          <Doc>
            <DocChrome><Dot /><Dot /><Dot $w={12} /><DocUrl /></DocChrome>
            <DocBody>
              <Band $h={91} $pad="9px 0 0 234px">
                <Box $w={83} $h={72} $r={15} />
                <Box $w={338} $h={71} $m="1px 0 0 9px" />
              </Band>
              <Band $h={49} $pad="9px 0 0 24px">
                <Box $w={36} $h={31} $r={15} />
                <Box $w={35} $h={31} $r={15} $m="0 0 0 18px" />
                <Box $w={35} $h={31} $r={15} $m="0 0 0 20px" />
                <Box $w={85} $h={26} $r={14} $m="3px 0 0 52px" />
                <Box $w={85} $h={26} $r={14} $m="3px 0 0 21px" />
                <Box $w={85} $h={26} $r={14} $m="3px 0 0 17px" />
                <Box $w={85} $h={26} $r={14} $m="3px 0 0 22px" />
                <Box $w={86} $h={26} $r={14} $m="3px 0 0 17px" />
                <Box $w={85} $h={26} $r={14} $m="3px 0 0 93px" />
              </Band>
              <Band $h={342}>
                <Column $w={233} $pad="8px 0 0 8px"><Crossed w={217} h={326} /></Column>
                <Column $w={432} $pad="9px 0 0 9px">
                  <Crossed w={414} h={231} />
                  <Words $h={19} $m="6px 0 5px 14px">
                    {WORDS_BIG.map(([w, gap], i) => <Word key={i} $w={w} $h={19} $gap={gap} />)}
                  </Words>
                  <Words $h={8} $m="0 0 15px 14px">
                    {WORDS_SMALL.map(([w, gap], i) => <Word key={i} $w={w} $h={8} $gap={gap} />)}
                  </Words>
                  <Box $w={382} $h={39} $m="0 0 0 14px" />
                </Column>
                <Column $w={255} $pad="13px 0 0 15px" $last>
                  <Aside>
                    <TextLines>{LINES.map((w, i) => <Word key={i} $w={w} $h={10} />)}</TextLines>
                    <Box $w={103} $h={93} $r={15} />
                  </Aside>
                </Column>
              </Band>
              <Band $h={57} $pad="8px 0 0 20px" $last>
                <Box $w={193} $h={41} $r={15} />
                <Box $w={192} $h={41} $r={15} $m="0 0 0 492px" />
              </Band>
            </DocBody>
          </Doc>
          <ResizeHandle>
            <svg width="15" height="15" viewBox="0 0 15 15"><rect x=".5" y=".5" width="14" height="14" rx="1.500" fill="#f2f2f2" stroke="#b9b9b9" /><path d="M4 11l7-7" stroke="#b0b0b0" strokeWidth="1.500" /><path d="M7.500 2.500h5v5zM2.500 7.500v5h5z" fill="#b0b0b0" /></svg>
          </ResizeHandle>
        </Page>
        <VScroll>
          <Arrow d="M0.500 7l4-4 4 4z" fill="#8b8b8b" />
          <VThumb />
          <Arrow d="M0.500 2h8l-4 4z" />
        </VScroll>
      </Viewport>
      <HScroll>
        <Arrow d="M6 .5v8l-4-4z" fill="#8b8b8b" />
        <HThumb />
        <Arrow d="M2 .5v8l4-4z" />
      </HScroll>

      <Taskbar>
        <Start>
          <StartMark>sz-sdj.c</StartMark>
          <svg width="16" height="16" viewBox="0 0 16 16" fill="#fff"><path d="M0 2.300L6.500 1.300v6.200H0zM7.300 1.200L16 0v7.500H7.300zM0 8.300h6.500v6.300L0 13.700zM7.300 8.300H16V16l-8.700-1.200z" /></svg>
        </Start>
        <Search>Search the web and Windows</Search>
        <TaskView>
          <svg width="20" height="14" fill="none" stroke="#fff"><path d="M4.500.5h11v13h-11zM3 2.500H.5v9H3M17 2.500h2.500v9H17" /></svg>
        </TaskView>
        {APPS.map((a, i) => {
          const w = i < 7 ? 46 : 45;
          return (
            <AppCell key={i} $w={w}>
              <AppFace $w={w} $active={a.active} $running={a.running}>{a.icon}</AppFace>
            </AppCell>
          );
        })}
        <Tray>
          <TrayMark>http://bgwall.net</TrayMark>
          <TrayIcons>
            <svg width="13" height="8" fill="none" stroke="#fff" strokeWidth="1.300"><path d="M1 7l5.500-5.500L12 7" /></svg>
            <svg width="16" height="13" viewBox="0 0 16 13" fill="none" stroke="#fff"><path d="M6.500 3.500h8v7h-9V9" strokeWidth="1.200" /><path d="M15.500 5.500v3M1.500 0v2M4.500 0v2M.5 2.500h5v2L3 6.500.5 4.500M3 6v3.500" /></svg>
            <svg width="13" height="13" viewBox="0 0 13 13" fill="none" stroke="#fff"><path d="M.5 12A11.500 11.500 0 0 1 12 .8M3.500 12A8.500 8.500 0 0 1 12 3.800M6.500 12A5.500 5.500 0 0 1 12 6.800" strokeWidth="1.200" /><path d="M9.500 9.500h3V12h-3z" fill="#fff" stroke="none" /></svg>
            <svg width="16" height="14" viewBox="0 0 16 14" fill="none" stroke="#fff"><path d="M.5 4.500h2l3-3v11l-3-3h-2zM8 4.500c1.200 1.500 1.200 3.500 0 5M10.500 2.700c2 2.500 2 6 0 8.500" /><path d="M13 1c2.800 3.500 2.800 8.500 0 12" stroke="#999" /></svg>
            <svg width="16" height="16" viewBox="0 0 16 16"><path d="M0 0h16v12H9.500L8 15.500 6.500 12H0z" fill="#fff" /><path d="M3 3.500h10M3 6h10M3 8.500h7" stroke="#222" /></svg>
          </TrayIcons>
          <Clock><span>12:35 AM</span><span>3/23/2016</span></Clock>
          <DesktopEdge />
        </Tray>
      </Taskbar>
    </Screen>
  );
}
